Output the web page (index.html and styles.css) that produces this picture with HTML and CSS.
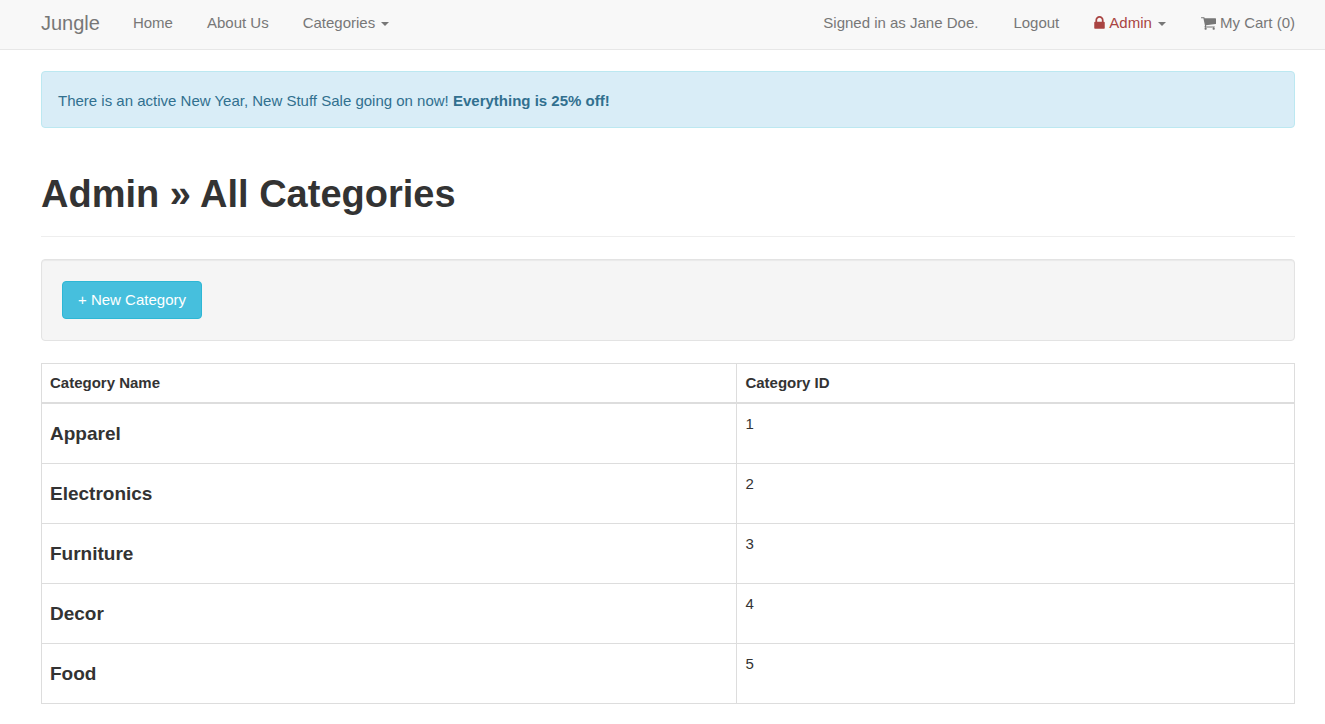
FILE: index.html
```html
<!DOCTYPE html>
<html lang="en">
<head>
<meta charset="utf-8">
<meta name="viewport" content="width=device-width, initial-scale=1">
<title>Jungle</title>
<link rel="stylesheet" href="styles.css">
</head>
<body>
<nav class="navbar">
  <a class="brand" href="#">Jungle</a>
  <ul class="nav">
    <li><a href="#">Home</a></li>
    <li><a href="#">About Us</a></li>
    <li><a href="#">Categories <span class="caret"></span></a></li>
  </ul>
  <ul class="nav nav-right">
    <li><span>Signed in as Jane Doe.</span></li>
    <li><a href="#">Logout</a></li>
    <li><a href="#"><span class="danger"><svg class="lock" viewBox="0 0 1152 1536" aria-hidden="true"><path d="M320 640h512v-192q0-106-75-181t-181-75-181 75-75 181v192zM1152 736v576q0 40-28 68t-68 28h-960q-40 0-68-28t-28-68v-576q0-40 28-68t68-28h32v-192q0-184 132-316t316-132 316 132 132 316v192h32q40 0 68 28t28 68z"/></svg>Admin</span> <span class="caret"></span></a></li>
    <li><a href="#"><svg class="cart" viewBox="0 0 1664 1408" aria-hidden="true"><path d="M640 1280q0 52-38 90t-90 38-90-38-38-90 38-90 90-38 90 38 38 90zM1536 1280q0 52-38 90t-90 38-90-38-38-90 38-90 90-38 90 38 38 90zM1664 192v512q0 24-16 42t-41 21l-1044 122q13 60 13 70 0 16-24 64h920q26 0 45 19t19 45-19 45-45 19h-1024q-26 0-45-19t-19-45q0-11 8-31t16-36 21-40 15-29l-177-823h-204q-26 0-45-19t-19-45 19-45 45-19h256q16 0 28 6t20 16 13 24 8 26 5 29 5 26h1201q26 0 45 19t19 45z"/></svg>My Cart (0)</a></li>
  </ul>
</nav>
<main class="content">
  <div class="alert">There is an active New Year, New Stuff Sale going on now! <strong>Everything is 25% off!</strong></div>
  <header class="page-header"><h1>Admin » All Categories</h1></header>
  <div class="well"><button class="btn" type="button">+ New Category</button></div>
  <table class="table">
    <thead><tr><th class="name-col" scope="col">Category Name</th><th class="id-col" scope="col">Category ID</th></tr></thead>
    <tbody>
      <tr><td><h4>Apparel</h4></td><td>1</td></tr>
      <tr><td><h4>Electronics</h4></td><td>2</td></tr>
      <tr><td><h4>Furniture</h4></td><td>3</td></tr>
      <tr><td><h4>Decor</h4></td><td>4</td></tr>
      <tr><td><h4>Food</h4></td><td>5</td></tr>
    </tbody>
  </table>
</main>
</body>
</html>
```
FILE: styles.css
```css
* { box-sizing: border-box; }
body {
  margin: 0;
  background: #fff;
  color: #333;
  font-family: "Helvetica Neue", Helvetica, "Liberation Sans", Arial, sans-serif;
  font-size: 15px;
  line-height: 22px;
}
.navbar {
  display: flex;
  align-items: center;
  padding: 12px 30px 15px 41px;
  background: #f8f8f8;
  border-bottom: 1px solid #e7e7e7;
  color: #777;
  white-space: nowrap;
}
.navbar a { color: inherit; text-decoration: none; }
.brand { margin-right: 33px; font-size: 20px; }
.nav {
  display: flex;
  gap: 34px;
  margin: 0;
  padding: 0;
  list-style: none;
}
.nav-right { gap: 35px; margin-left: auto; }
.caret {
  display: inline-block;
  margin-left: 2px;
  vertical-align: middle;
  border-top: 4px solid;
  border-right: 4px solid transparent;
  border-left: 4px solid transparent;
}
.danger { color: #a94442; }
.lock, .cart { fill: currentColor; }
.lock { width: 11px; height: 14px; margin-right: 4px; vertical-align: -2px; }
.cart { width: 15px; height: 13px; margin-right: 4px; vertical-align: -2px; }
.content { padding: 21px 30px 20px 41px; }
.alert {
  padding: 18px 16px 15px;
  border: 1px solid #bce8f1;
  border-radius: 4px;
  background: #d9edf7;
  color: #31708f;
}
.page-header {
  margin: 43px 0 22px;
  padding-bottom: 18px;
  border-bottom: 1px solid #eee;
}
h1 { margin: 0; font-size: 38px; line-height: 47px; font-weight: bold; }
.well {
  margin-bottom: 22px;
  padding: 21px 20px;
  border: 1px solid #e3e3e3;
  border-radius: 4px;
  background: #f5f5f5;
  box-shadow: inset 0 1px 1px rgba(0, 0, 0, .05);
}
.btn {
  display: block;
  padding: 7px 15px;
  border: 1px solid #2db7d5;
  border-radius: 4px;
  background: #46bfdd;
  color: #fff;
  font: inherit;
}
.table { width: 100%; border-collapse: collapse; table-layout: fixed; }
.table th, .table td {
  padding: 9px 8px;
  border: 1px solid #ddd;
  text-align: left;
  vertical-align: top;
}
.table th { padding: 8px; border-bottom-width: 2px; }
.table .name-col { width: 55.5%; }
.table .id-col { width: 44.5%; }
h4 { margin: 10px 0 9px; font-size: 19px; line-height: 22px; font-weight: bold; }
```
